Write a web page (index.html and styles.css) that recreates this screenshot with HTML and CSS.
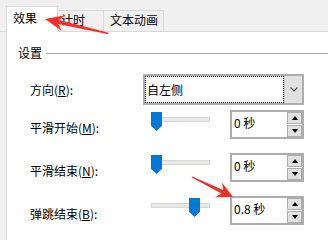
FILE: index.html
```html
<!DOCTYPE html>
<html lang="zh-CN">
<head>
  <meta charset="UTF-8" />
  <title>效果</title>
  <link rel="stylesheet" href="styles.css">
</head>
<body>
  <div class="dialog">
    <div class="tabs">
      <div class="tab active">效果</div>
      <div class="tab tab-timing">计时</div>
      <div class="tab tab-text">文本动画</div>
    </div>

    <div class="panel">
      <div class="group-title"><span>设置</span></div>

      <div class="form">
        <div class="row row-select">
          <label>方向(<u>R</u>):</label>
          <div class="combo">
            <span class="combo-value">自左侧</span>
            <span class="combo-btn">
              <svg width="8" height="5" viewBox="0 0 8 5"><path d="M0.5 0.5 L4 4 L7.5 0.5" fill="none" stroke="#555" stroke-width="1.2"/></svg>
            </span>
          </div>
        </div>

        <div class="row">
          <label>平滑开始(<u>M</u>):</label>
          <div class="slider"><div class="track"></div><div class="thumb" style="left:0px"></div></div>
          <div class="spin">
            <span class="spin-value">0 秒</span>
            <div class="spin-btns"><span class="up"></span><span class="down"></span></div>
          </div>
        </div>

        <div class="row">
          <label>平滑结束(<u>N</u>):</label>
          <div class="slider"><div class="track"></div><div class="thumb" style="left:0px"></div></div>
          <div class="spin">
            <span class="spin-value">0 秒</span>
            <div class="spin-btns"><span class="up"></span><span class="down"></span></div>
          </div>
        </div>

        <div class="row">
          <label>弹跳结束(<u>B</u>):</label>
          <div class="slider"><div class="track"></div><div class="thumb" style="left:38px"></div></div>
          <div class="spin">
            <span class="spin-value">0.8 秒</span>
            <div class="spin-btns"><span class="up"></span><span class="down"></span></div>
          </div>
        </div>
      </div>
    </div>

    <!-- red annotation arrows drawn over the dialog -->
    <svg class="marks" width="328" height="240" viewBox="0 0 328 240">
      <polygon fill="#f2302a" points="45,19 65.2,15.3 59.2,19.9 108.6,32.8 108.2,34.2 58.2,24.1 61.8,30.9"/>
      <polygon fill="#f2302a" points="233,197 222.1,182.8 223.1,189.9 192.3,176.4 191.7,177.6 221.3,193.5 215.1,197.2"/>
    </svg>
  </div>
</body>
</html>
```

FILE: styles.css
```css
body {
  margin: 0;
  font-family: "Noto Sans CJK SC", sans-serif;
  font-size: 12px;
  color: #000;
}
.dialog {
  position: relative;
  width: 328px;
  height: 240px;
  overflow: hidden;
  background: #f0f0f0;
}
.tabs {
  display: flex;
  align-items: flex-end;
  height: 32px;
  box-sizing: border-box;
  padding-left: 6px;
  border-bottom: 1px solid #d9d9d9;
}
.tab {
  box-sizing: border-box;
  height: 21px;
  line-height: 18px;
  padding-left: 6px;
  border: 1px solid #d9d9d9;
  border-left: none;
  border-bottom: none;
}
.tab.active {
  position: relative;
  width: 52px;
  height: 26px;
  line-height: 21px;
  margin-bottom: -1px;
  border-left: 1px solid #d9d9d9;
  background: #fff;
}
.tab-timing {
  width: 46px;
  padding-left: 3px;
}
.tab-text {
  width: 60px;
}
.panel {
  height: 208px;
  box-sizing: border-box;
  margin-left: 6px;
  padding-top: 14px;
  border-left: 1px solid #d9d9d9;
  background: #fff;
}
.group-title {
  display: flex;
  align-items: center;
  gap: 4px;
  height: 14px;
  line-height: 14px;
  padding-left: 11px;
}
.group-title::after {
  content: "";
  flex: 1;
  height: 1px;
  background: #a8a8a8;
}
.form {
  margin-top: 14px;
  padding-left: 23px;
}
.row {
  display: flex;
  align-items: center;
  height: 29px;
}
.row + .row {
  margin-top: 14px;
}
.row-select {
  height: 31px;
}
.row-select + .row {
  margin-top: 5px;
}
.row label {
  flex: none;
  width: 113px;
}
.row:not(.row-select) label {
  padding-top: 6px;
}
.combo {
  display: flex;
  width: 161px;
  height: 31px;
  box-sizing: border-box;
  border: 2px solid #adadad;
}
.combo-value {
  flex: 1;
  padding-left: 1px;
  line-height: 25px;
  border: 1px dotted #000;
}
.combo-btn {
  display: flex;
  align-items: center;
  justify-content: center;
  width: 17px;
  background: #e1e1e1;
  border-left: 1px solid #c9c9c9;
}
.slider {
  position: relative;
  flex: none;
  width: 59px;
  height: 29px;
  margin-left: 8px;
  margin-right: 20px;
}
.track {
  height: 5px;
  margin-top: 7px;
  box-sizing: border-box;
  border: 1px solid #d6d6d6;
  background: #e7eae7;
}
.thumb {
  position: absolute;
  top: 2px;
  width: 11px;
  height: 19px;
  background: #0078d7;
  clip-path: polygon(0 0, 100% 0, 100% 72%, 50% 100%, 0 72%);
}
.spin {
  display: flex;
  width: 74px;
  height: 29px;
  box-sizing: border-box;
  border: 2px solid #adadad;
}
.spin-value {
  flex: 1;
  padding-left: 2px;
  line-height: 22px;
}
.spin-btns {
  display: flex;
  flex-direction: column;
  gap: 1px;
  width: 15px;
}
.spin-btns span {
  display: flex;
  align-items: center;
  justify-content: center;
  height: 12px;
  box-sizing: border-box;
  border: 1px solid #adadad;
  background: #e1e1e1;
}
.spin-btns .up::before {
  content: "";
  border: 3.5px solid transparent;
  border-top: none;
  border-bottom: 4px solid #000;
}
.spin-btns .down::before {
  content: "";
  border: 3.5px solid transparent;
  border-bottom: none;
  border-top: 4px solid #000;
}
.marks {
  position: absolute;
  top: 0;
  left: 0;
  pointer-events: none;
}
```
